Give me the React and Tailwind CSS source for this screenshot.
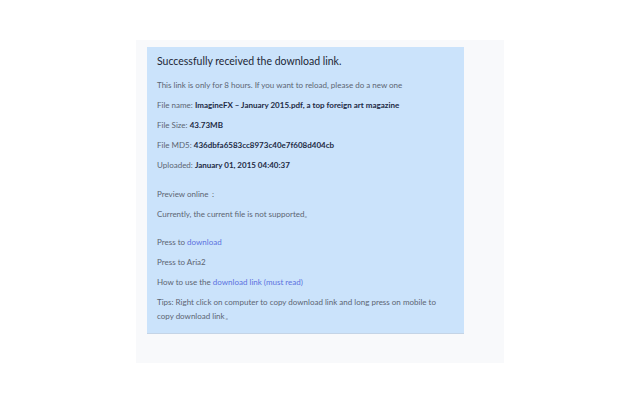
export default function App() {
  const font = { fontFamily: 'Lato, "Open Sans", sans-serif' };
  return (
    <div className="w-[640px] h-[400px] bg-white relative" style={font}>
      <div className="pt-[40px] pl-[136px]">
        <div className="w-[368px] h-[323px] bg-[#f8f9fb] pt-[7px] pl-[11px]">
          <div className="w-[317px] h-[287px] bg-[#cbe3fb] border-b border-[#c4d4e6] pl-[10px] pr-[12px] pt-[6px] text-[8px] text-[#5c6572]">
            <div className="text-[10.5px] text-[#1d2735] leading-[16px] h-[22px]">Successfully received the download link.</div>
            <div className="leading-[20px]">This link is only for 8 hours. If you want to reload, please do a new one</div>
            <div className="leading-[20px]">File name: <span className="font-bold text-[#1d2a44]">ImagineFX – January 2015.pdf, a top foreign art magazine</span></div>
            <div className="leading-[20px]">File Size: <span className="font-bold text-[#1d2a44]">43.73MB</span></div>
            <div className="leading-[20px]">File MD5: <span className="font-bold text-[#1d2a44]">436dbfa6583cc8973c40e7f608d404cb</span></div>
            <div className="leading-[20px]">Uploaded: <span className="font-bold text-[#1d2a44]">January 01, 2015 04:40:37</span></div>
            <div className="leading-[20px] mt-[9px]">Preview online：</div>
            <div className="leading-[20px]">Currently, the current file is not supported。</div>
            <div className="leading-[20px] mt-[8px]">Press to <span className="text-[#5b72e0]">download</span></div>
            <div className="leading-[20px]">Press to Aria2</div>
            <div className="leading-[20px]">How to use the <span className="text-[#5b72e0]">download link (must read)</span></div>
            <div className="leading-[14px] mt-[3px]">Tips: Right click on computer to copy download link and long press on mobile to copy download link。</div>
          </div>
        </div>
      </div>
    </div>
  );
}
